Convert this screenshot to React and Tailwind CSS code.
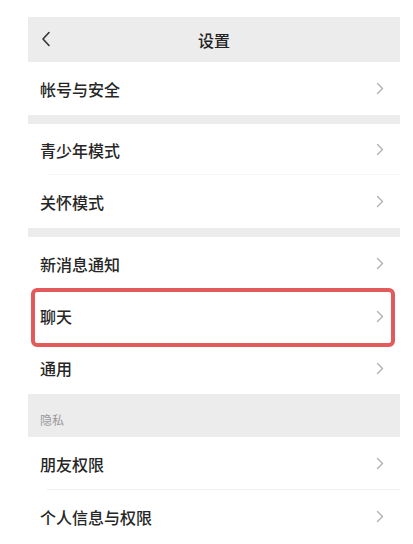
import React from "react"

function Chevron() {
  return (
    <svg width="8" height="13" viewBox="0 0 8 13" fill="none" className="shrink-0">
      <path d="M1.5 1.5 L6.5 6.5 L1.5 11.5" stroke="#b0b0b0" strokeWidth="1.4" strokeLinecap="round" strokeLinejoin="round" />
    </svg>
  )
}

function Row({ label, h = "h-[53px]", divider = "", highlight = false }) {
  return (
    <div className={`relative flex items-center justify-between bg-white pl-[12px] pr-[16px] ${h}`}>
      <span className="text-[16px] font-medium text-[#262626]">{label}</span>
      <Chevron />
      {divider && <div className={`absolute bottom-0 left-[19px] right-0 h-px ${divider}`} />}
      {highlight && (
        <div className="absolute left-[3px] right-[5px] top-[-2px] bottom-[-5px] z-10 rounded-[6px] border-[4px] border-[#e35a5a]" />
      )}
    </div>
  )
}

function Gap() {
  return <div className="h-[9px] bg-[#ececec]" />
}

export default function App() {
  return (
    <div className="min-h-[544px] bg-white pt-[17px] pl-[28px] pr-[13px] font-['Noto_Sans_CJK_SC','Noto_Sans',sans-serif]">
      {/* Cabeçalho */}
      <div className="relative flex h-[45px] items-center justify-center bg-[#ececec]">
        <svg width="10" height="16" viewBox="0 0 10 16" fill="none" className="absolute left-[13px] top-[14px]">
          <path d="M8 1.5 L2 8 L8 14.5" stroke="#333" strokeWidth="1.6" strokeLinecap="round" strokeLinejoin="round" />
        </svg>
        <span className="text-[16px] font-medium text-[#222]">设置</span>
      </div>

      <Row label="帐号与安全" />
      <Gap />
      <Row label="青少年模式" h="h-[51px]" divider="bg-[#f7f7f7]" />
      <Row label="关怀模式" />
      <Gap />
      <Row label="新消息通知" />
      <Row label="聊天" h="h-[52px]" highlight />
      <Row label="通用" h="h-[52px]" />

      <div className="flex h-[43px] items-end bg-[#ececec] pb-[8px] pl-[12px]">
        <span className="text-[12px] text-[#9a9a9a]">隐私</span>
      </div>

      <Row label="朋友权限" divider="bg-[#efefef]" />
      <Row label="个人信息与权限" />
    </div>
  )
}
